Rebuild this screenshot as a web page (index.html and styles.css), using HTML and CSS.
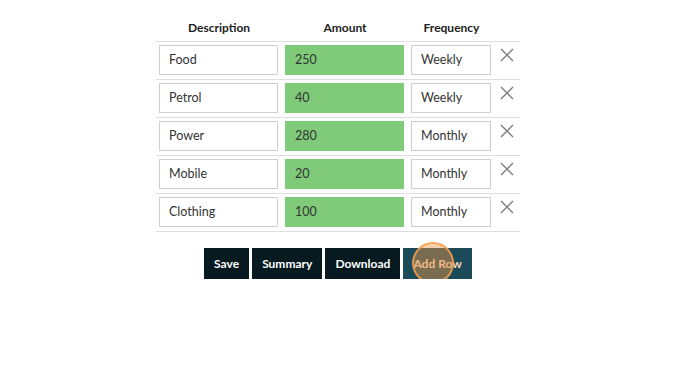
FILE: index.html
```html
<!DOCTYPE html>
<html>
<head>
<meta charset="utf-8">
<link rel="stylesheet" href="styles.css">
</head>
<body>
<div class="page">
  <table class="budget">
    <thead>
      <tr>
        <th class="c-desc">Description</th>
        <th class="c-amt">Amount</th>
        <th class="c-freq">Frequency</th>
        <th class="c-del"></th>
      </tr>
    </thead>
    <tbody>
      <tr>
        <td><div class="field">Food</div></td>
        <td><div class="field amount">250</div></td>
        <td><div class="field">Weekly</div></td>
        <td class="del"><svg viewBox="0 0 14 14" class="x"><path d="M1 1L13 13M13 1L1 13"/></svg></td>
      </tr>
      <tr>
        <td><div class="field">Petrol</div></td>
        <td><div class="field amount">40</div></td>
        <td><div class="field">Weekly</div></td>
        <td class="del"><svg viewBox="0 0 14 14" class="x"><path d="M1 1L13 13M13 1L1 13"/></svg></td>
      </tr>
      <tr>
        <td><div class="field">Power</div></td>
        <td><div class="field amount">280</div></td>
        <td><div class="field">Monthly</div></td>
        <td class="del"><svg viewBox="0 0 14 14" class="x"><path d="M1 1L13 13M13 1L1 13"/></svg></td>
      </tr>
      <tr>
        <td><div class="field">Mobile</div></td>
        <td><div class="field amount">20</div></td>
        <td><div class="field">Monthly</div></td>
        <td class="del"><svg viewBox="0 0 14 14" class="x"><path d="M1 1L13 13M13 1L1 13"/></svg></td>
      </tr>
      <tr>
        <td><div class="field">Clothing</div></td>
        <td><div class="field amount">100</div></td>
        <td><div class="field">Monthly</div></td>
        <td class="del"><svg viewBox="0 0 14 14" class="x"><path d="M1 1L13 13M13 1L1 13"/></svg></td>
      </tr>
    </tbody>
  </table>
  <div class="actions">
    <button class="btn">Save</button>
    <button class="btn">Summary</button>
    <button class="btn">Download</button>
    <button class="btn btn-hover">Add Row<span class="tap"></span></button>
  </div>
</div>
</body>
</html>
```
FILE: styles.css
```css
html, body {
  margin: 0;
  padding: 0;
  background: #ffffff;
}
body {
  font-family: Lato, "Open Sans", sans-serif;
  color: #333333;
}
.page {
  width: 676px;
  padding-top: 15px;
  display: flex;
  flex-direction: column;
  align-items: center;
}
.budget {
  border-collapse: collapse;
  table-layout: fixed;
  width: 364px;
}
.budget th {
  font-size: 12px;
  font-weight: 700;
  line-height: 16px;
  padding: 5px 0;
  text-align: center;
  color: #222;
}
.c-desc { width: 126px; }
.c-amt { width: 126px; }
.c-freq { width: 87px; }
.c-del { width: 25px; }
.budget td {
  border-top: 1px solid #dedede;
  padding: 3px 4px 4px 3px;
  vertical-align: top;
}
.budget tbody tr:last-child td {
  border-bottom: 1px solid #dedede;
}
.field {
  box-sizing: border-box;
  height: 30px;
  border: 1px solid #cfcfcf;
  background: #fff;
  padding: 0 9px;
  font-size: 12.5px;
  line-height: 28px;
  color: #333;
  white-space: nowrap;
}
.field.amount {
  background: #7fcb79;
  border-color: #7fcb79;
}
.budget td.del {
  padding: 6px 0 0 5px;
}
.x {
  width: 14px;
  height: 14px;
  display: block;
}
.x path {
  stroke: #7a7a7a;
  stroke-width: 1.3;
  fill: none;
}
.actions {
  margin-top: 16px;
  display: flex;
  gap: 3px;
}
.btn {
  position: relative;
  height: 31px;
  padding: 0 10px;
  border: none;
  background: #071a20;
  color: #ffffff;
  font-family: Lato, "Open Sans", sans-serif;
  font-weight: 700;
  font-size: 12px;
}
.btn-hover {
  background: #1b4a59;
  color: #f3d7b7;
}
.tap {
  position: absolute;
  left: 9px;
  top: -6px;
  width: 42px;
  height: 42px;
  box-sizing: border-box;
  border-radius: 50%;
  border: 2px solid rgba(245, 160, 80, 0.85);
  background: rgba(240, 150, 70, 0.45);
}
```
